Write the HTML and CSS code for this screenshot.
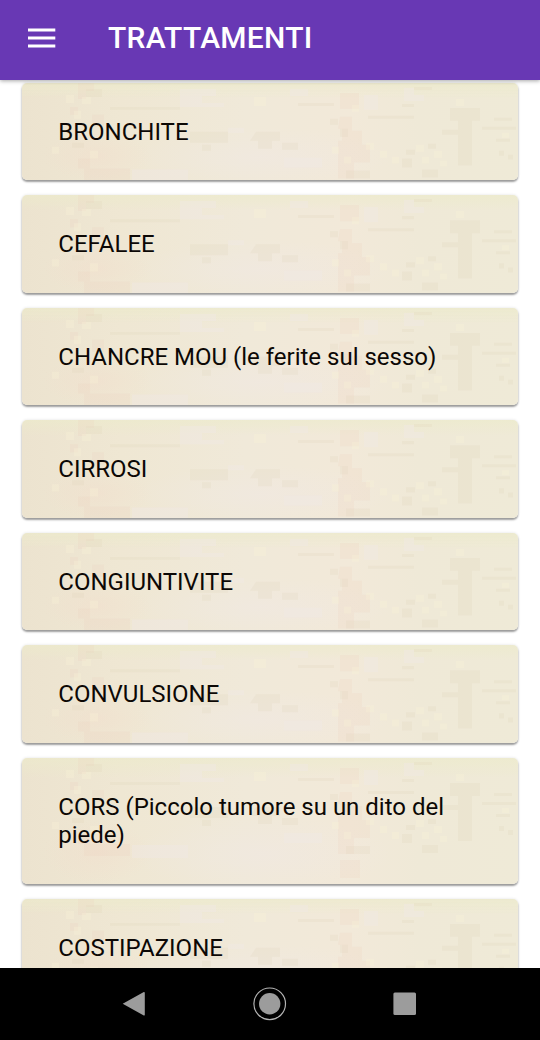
FILE: index.html
```
<!DOCTYPE html>
<html lang="it">
<head>
    <meta charset="utf-8">
    <title>Trattamenti</title>
    <meta name="viewport" content="width=device-width, initial-scale=1.0">
    <link rel="stylesheet" href="styles.css">
</head>
<body>
    <header class="toolbar">
        <svg class="menu" viewBox="0 0 28 20" width="28" height="20">
            <path d="M0 2h27.3M0 10h27.3M0 18h27.3" stroke="#fff" stroke-width="2.8"/>
        </svg>
        <h1>TRATTAMENTI</h1>
    </header>

    <main class="list">
        <div class="card">BRONCHITE</div>
        <div class="card">CEFALEE</div>
        <div class="card">CHANCRE MOU (le ferite sul sesso)</div>
        <div class="card">CIRROSI</div>
        <div class="card">CONGIUNTIVITE</div>
        <div class="card">CONVULSIONE</div>
        <div class="card">CORS (Piccolo tumore su un dito del piede)</div>
        <div class="card">COSTIPAZIONE</div>
    </main>

    <nav class="navbar">
        <svg viewBox="0 0 36 36" width="36" height="36">
            <path d="M5.7 17.8L26.8 6.1a.7.7 0 0 1 1 .7v22a.7.7 0 0 1-1 .7z" fill="#9c9c9c"/>
        </svg>
        <svg viewBox="0 0 36 36" width="36" height="36">
            <circle cx="17.7" cy="17.8" r="15.8" fill="none" stroke="#b4b4b4" stroke-width="1.2"/>
            <circle cx="17.7" cy="17.8" r="10.7" fill="#9c9c9c"/>
        </svg>
        <svg viewBox="0 0 36 36" width="36" height="36">
            <rect x="6.4" y="6.4" width="22.6" height="22.6" rx="1.5" fill="#9c9c9c"/>
        </svg>
    </nav>
</body>
</html>
```
FILE: styles.css
```
body {
    margin: 0;
    height: 1040px;
    display: flex;
    flex-direction: column;
    overflow: hidden;
    background: #fff;
    color: #0c0805;
    font-family: Roboto, sans-serif;
}
.toolbar {
    position: relative; /* keeps the shadow above the cards */
    z-index: 1;
    flex: none;
    box-sizing: border-box;
    height: 80px;
    display: flex;
    align-items: center;
    gap: 52px;
    padding: 0 28px 4px;
    background: #6838b4;
    box-shadow: 0 1px 4px rgba(0, 0, 0, 0.35);
}
.toolbar h1 {
    margin: 0;
    color: #fff;
    font-size: 30px;
    font-weight: 500;
    line-height: 36px;
    letter-spacing: 0.3px;
}
.list {
    flex: 1;
    min-height: 0;
    overflow: hidden;
    padding: 2.75px 22px 0;
}
.card {
    box-sizing: border-box;
    margin-bottom: 15px;
    padding: 35.1px 36.3px 33.9px;
    border-radius: 5px;
    font-size: 24px;
    line-height: 28.5px;
    /* parchment: faint blocky stains over a warm base */
    background:
        url("data:image/svg+xml,%3Csvg xmlns='http://www.w3.org/2000/svg' width='496' height='126'%3E%3Cg fill='%23d9ceb0' opacity='.17'%3E%3Cpath d='M428 25h30v13h-8v45h-14V52h-16v-5h16v-9h-8zM472 35h18v3h-18zM460 44h34v3h-34zM474 56h14v3h-14zM477 68h5v5h-5zM486 72h5v5h-5zM346 33h46v3h-46zM276 20h36v3h-36zM380 21h12v3h-12zM168 49h38v11h-38zM180 62h9v6h-9zM234 49h24v9h-8v8h-14v-8h-8zM260 60h16v7h-16zM88 24h70v3H88zM64 6h16v8H64zM380 76h10v9h-10zM400 87h16v8h-16zM392 4h18v3h-18zM308 36h8v6h-8zM318 46h8v8h-8zM324 88h24v8h-24zM50 60h12v5H50zM406 61h8v5h-8zM384 67h9v5h-9z'/%3E%3C/g%3E%3Cg fill='%23efd3bd' opacity='.22'%3E%3Cpath d='M318 10h19v16h-19zM318 34h12v14h10v14h8v18h-16v16h-16V58h4V46h-4zM56 0h16v8h-8v8h-8zM48 24h8v8h-8zM70 32h12v12H70zM56 76h12v10H56zM62 86h46v12H62zM318 102h20v18h-20z'/%3E%3C/g%3E%3Cg fill='%23f0e8e6' opacity='.4'%3E%3Cpath d='M158 6h36v7h-14v7h22v4h-44zM382 5h10v7h10v6h-20zM110 87h56v13h-56zM262 75h38v10h-38zM206 45h16v5h-16zM342 12h14v15h-14zM268 6h18v7h-18z'/%3E%3C/g%3E%3Cg fill='%23f8f2d8' opacity='.32'%3E%3Cpath d='M44 12h8v8h-8zM60 14h9v7h-9zM52 28h7v8h-7zM30 64h7v7h-7zM68 68h8v8h-8zM232 14h12v9h-12zM310 64h7v7h-7zM322 74h7v7h-7zM330 22h7v7h-7zM344 60h8v7h-8zM358 68h7v7h-7zM370 74h7v7h-7zM394 62h8v7h-8zM400 74h7v7h-7zM412 68h8v7h-8zM418 78h7v6h-7zM434 16h8v7h-8zM480 50h7v5h-7z'/%3E%3C/g%3E%3C/svg%3E") 0 0 no-repeat,
        radial-gradient(closest-side, rgba(242, 222, 205, 0.5), transparent) 20px 100% / 110px 50% no-repeat,
        radial-gradient(closest-side, rgba(240, 232, 226, 0.6), transparent) 110px 115% / 260px 60% no-repeat,
        linear-gradient(rgba(236, 235, 203, 0.65), transparent 16%),
        linear-gradient(90deg, #ece3cf, #efe7d3 20%, #f0e9d9 45%, #f2e9d9 66%, #efe9d7 80%, #efead7);
    box-shadow: 0 2px 2px rgba(0, 0, 0, 0.37), 0 0 3px rgba(0, 0, 0, 0.12);
}
.navbar {
    flex: none;
    box-sizing: border-box;
    height: 72px;
    display: flex;
    justify-content: space-between;
    align-items: center;
    padding: 0 117px;
    background: #000;
}
```
